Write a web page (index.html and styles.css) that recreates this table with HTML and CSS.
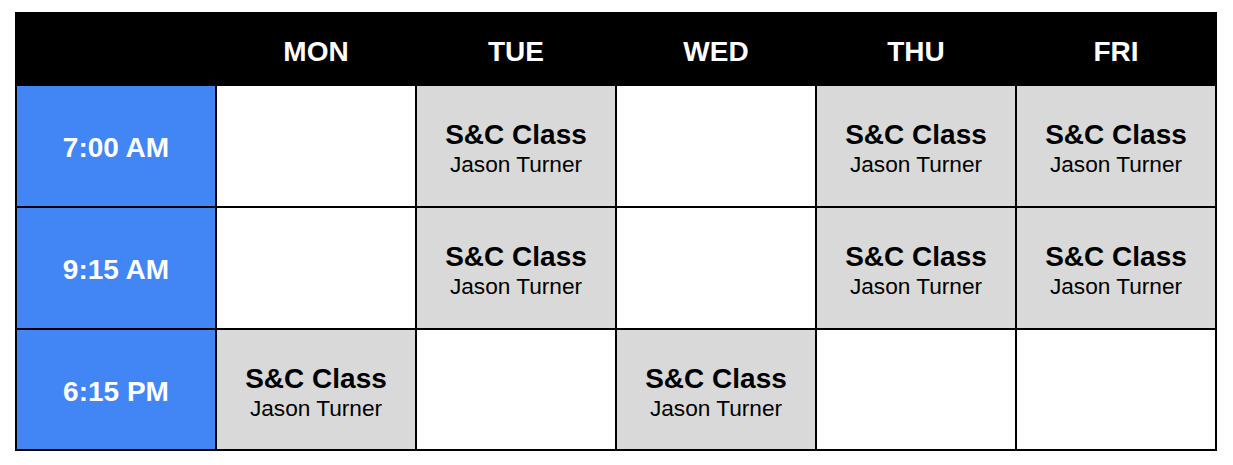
FILE: index.html
```html
<!DOCTYPE html>
<html>
<head>
<meta charset="utf-8">
<link rel="stylesheet" href="styles.css">
</head>
<body>
<div class="schedule">
  <div class="head"></div>
  <div class="head">MON</div>
  <div class="head">TUE</div>
  <div class="head">WED</div>
  <div class="head">THU</div>
  <div class="head">FRI</div>

  <div class="time">7:00 AM</div>
  <div class="slot"></div>
  <div class="slot booked"><span class="cls">S&amp;C Class</span><span class="coach">Jason Turner</span></div>
  <div class="slot"></div>
  <div class="slot booked"><span class="cls">S&amp;C Class</span><span class="coach">Jason Turner</span></div>
  <div class="slot booked"><span class="cls">S&amp;C Class</span><span class="coach">Jason Turner</span></div>

  <div class="time">9:15 AM</div>
  <div class="slot"></div>
  <div class="slot booked"><span class="cls">S&amp;C Class</span><span class="coach">Jason Turner</span></div>
  <div class="slot"></div>
  <div class="slot booked"><span class="cls">S&amp;C Class</span><span class="coach">Jason Turner</span></div>
  <div class="slot booked"><span class="cls">S&amp;C Class</span><span class="coach">Jason Turner</span></div>

  <div class="time">6:15 PM</div>
  <div class="slot booked"><span class="cls">S&amp;C Class</span><span class="coach">Jason Turner</span></div>
  <div class="slot"></div>
  <div class="slot booked"><span class="cls">S&amp;C Class</span><span class="coach">Jason Turner</span></div>
  <div class="slot"></div>
  <div class="slot"></div>
</div>
</body>
</html>
```
FILE: styles.css
```css
html, body {
  margin: 0;
  padding: 0;
  background: #ffffff;
}
body {
  padding: 12px 0 0 15px;
  font-family: "Liberation Sans", Arial, sans-serif;
}
.schedule {
  display: grid;
  grid-template-columns: repeat(6, 198px);
  grid-template-rows: 70px 120px 120px 119px;
  gap: 2px;
  padding: 2px;
  background: #000000;
  width: fit-content;
}
.head {
  background: #000000;
  color: #ffffff;
  font-weight: bold;
  font-size: 28px;
  display: flex;
  align-items: center;
  justify-content: center;
  padding-top: 5px;
  box-sizing: border-box;
}
.time {
  background: #4285f4;
  color: #ffffff;
  font-weight: bold;
  font-size: 28px;
  display: flex;
  align-items: center;
  justify-content: center;
  padding-top: 4px;
  box-sizing: border-box;
}
.slot {
  background: #ffffff;
  display: flex;
  flex-direction: column;
  align-items: center;
  justify-content: center;
  padding-top: 2px;
  box-sizing: border-box;
  color: #000000;
}
.slot.booked {
  background: #d9d9d9;
}
.cls {
  font-weight: bold;
  font-size: 28px;
  line-height: 34px;
}
.coach {
  font-size: 22.67px;
  line-height: 24px;
}
```
